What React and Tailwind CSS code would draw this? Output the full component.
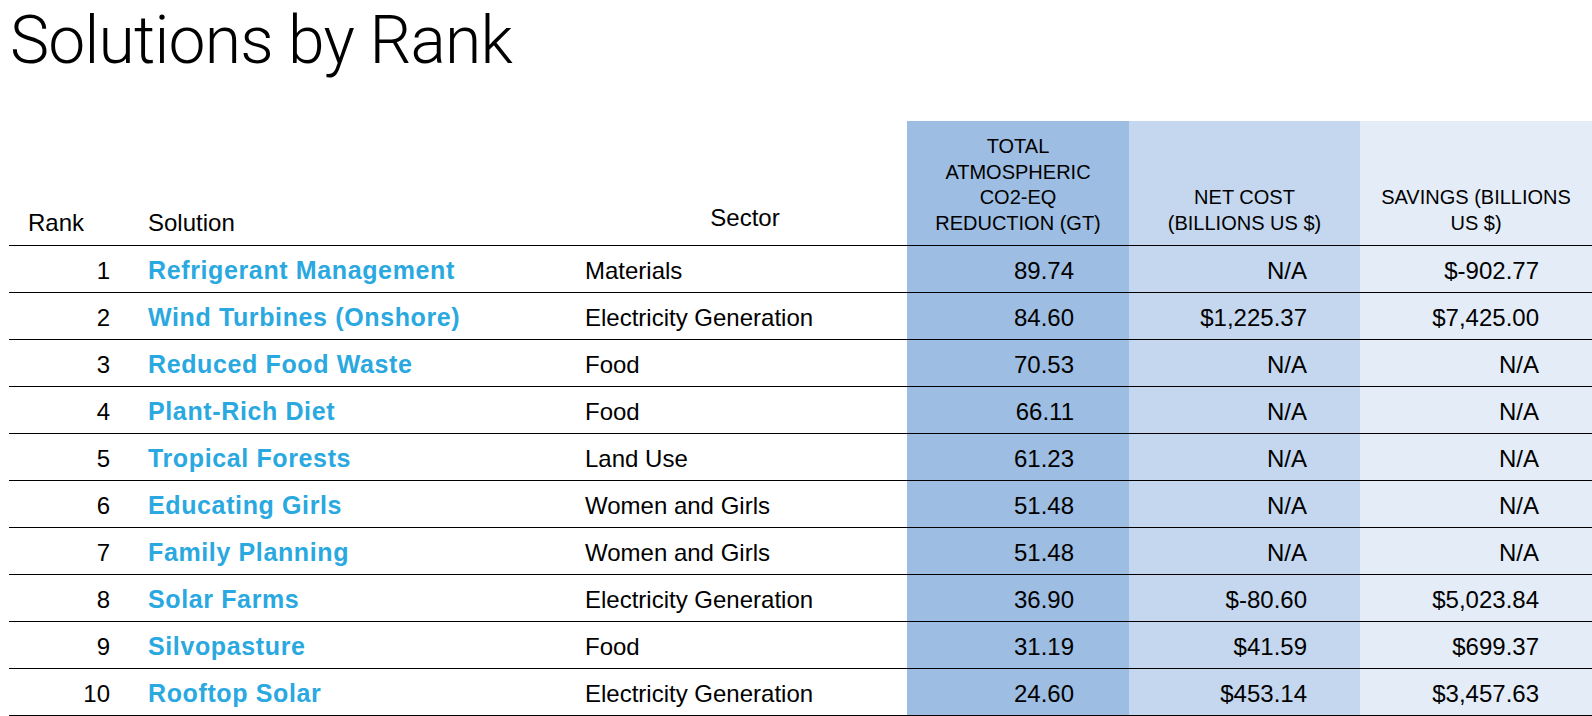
const rows = [
  { rank: 1, name: 'Refrigerant Management', sector: 'Materials', total: '89.74', cost: 'N/A', savings: '$-902.77' },
  { rank: 2, name: 'Wind Turbines (Onshore)', sector: 'Electricity Generation', total: '84.60', cost: '$1,225.37', savings: '$7,425.00' },
  { rank: 3, name: 'Reduced Food Waste', sector: 'Food', total: '70.53', cost: 'N/A', savings: 'N/A' },
  { rank: 4, name: 'Plant-Rich Diet', sector: 'Food', total: '66.11', cost: 'N/A', savings: 'N/A' },
  { rank: 5, name: 'Tropical Forests', sector: 'Land Use', total: '61.23', cost: 'N/A', savings: 'N/A' },
  { rank: 6, name: 'Educating Girls', sector: 'Women and Girls', total: '51.48', cost: 'N/A', savings: 'N/A' },
  { rank: 7, name: 'Family Planning', sector: 'Women and Girls', total: '51.48', cost: 'N/A', savings: 'N/A' },
  { rank: 8, name: 'Solar Farms', sector: 'Electricity Generation', total: '36.90', cost: '$-80.60', savings: '$5,023.84' },
  { rank: 9, name: 'Silvopasture', sector: 'Food', total: '31.19', cost: '$41.59', savings: '$699.37' },
  { rank: 10, name: 'Rooftop Solar', sector: 'Electricity Generation', total: '24.60', cost: '$453.14', savings: '$3,457.63' },
];

export default function App() {
  return (
    <div className="w-[1592px] h-[716px] overflow-hidden bg-white text-black font-['Liberation_Sans',Arial,sans-serif]">
      {/* Title */}
      <h1 className="pl-[10px] pt-[8px] h-[121px] text-[66px] leading-none font-light font-['Roboto',sans-serif] tracking-[-0.8px]">
        Solutions by Rank
      </h1>

      {/* Table */}
      <div className="pl-[9px]">
        {/* Header */}
        <div className="flex h-[125px] border-b border-black text-[24px]">
          <div className="w-[101px] flex items-end pl-[19px] pb-[4px]">Rank</div>
          <div className="w-[465px] flex items-end pl-[38px] pb-[4px]">Solution</div>
          <div className="w-[332px] flex items-end justify-center pb-[9px] pl-[8px]">Sector</div>
          <div className="w-[222px] bg-[#9dbde2] flex flex-col justify-end items-center pb-[9px] text-[20px] leading-[25.5px]">
            <span>TOTAL</span>
            <span>ATMOSPHERIC</span>
            <span>CO2-EQ</span>
            <span>REDUCTION (GT)</span>
          </div>
          <div className="w-[231px] bg-[#c4d7ee] flex flex-col justify-end items-center pb-[9px] text-[20px] leading-[25.5px]">
            <span>NET COST</span>
            <span>(BILLIONS US $)</span>
          </div>
          <div className="w-[232px] bg-[#e4ecf8] flex flex-col justify-end items-center pb-[9px] text-[20px] leading-[25.5px]">
            <span>SAVINGS (BILLIONS</span>
            <span>US $)</span>
          </div>
        </div>

        {/* Rows */}
        {rows.map((row) => (
          <div key={row.rank} className="flex h-[47px] border-b border-black text-[24px]">
            <div className="w-[101px] flex items-center justify-end pt-[3px]">{row.rank}</div>
            <div className="w-[465px] flex items-center pl-[38px] pt-[3px] font-bold text-[25px] text-[#2aa8e0] tracking-[0.025em]">
              {row.name}
            </div>
            <div className="w-[332px] flex items-center pl-[10px] pt-[3px]">{row.sector}</div>
            <div className="w-[222px] bg-[#9dbde2] flex items-center justify-end pr-[55px] pt-[3px]">{row.total}</div>
            <div className="w-[231px] bg-[#c4d7ee] flex items-center justify-end pr-[53px] pt-[3px]">{row.cost}</div>
            <div className="w-[232px] bg-[#e4ecf8] flex items-center justify-end pr-[53px] pt-[3px]">{row.savings}</div>
          </div>
        ))}
      </div>
    </div>
  );
}
